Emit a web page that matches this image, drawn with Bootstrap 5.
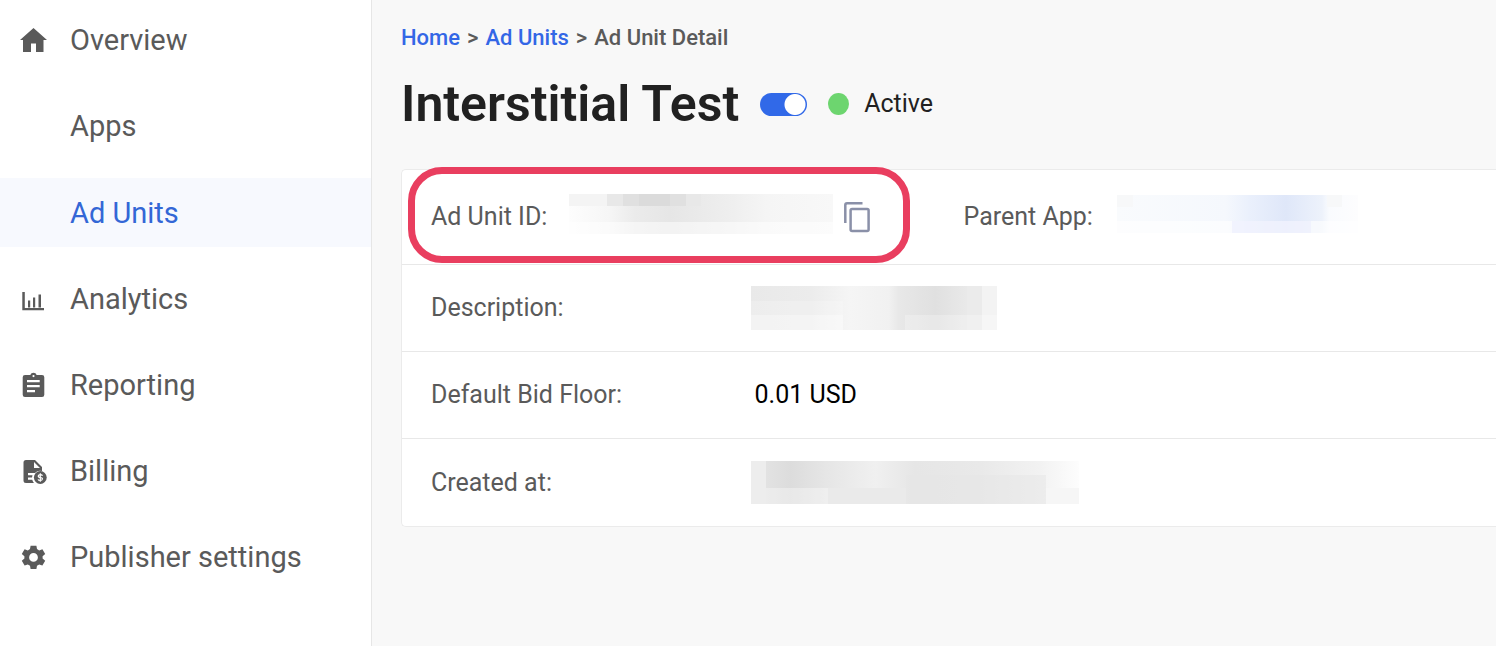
<!DOCTYPE html>
<html lang="en">
<head>
<meta charset="utf-8">
<meta name="viewport" content="width=device-width, initial-scale=1">
<title>Ad Unit Detail</title>
<link href="https://cdn.jsdelivr.net/npm/bootstrap@5.3.0/dist/css/bootstrap.min.css" rel="stylesheet">
<style>
  body { font-family: Roboto, "Liberation Sans", sans-serif; background: #f8f8f8; color: #212121; }
  a { text-decoration: none; }

  /* Sidebar */
  .side-panel { width: 372px; background: #fff; border-right: 1px solid #e6e6e6; padding-top: 5px; }
  .side-menu { gap: 17px; }
  .side-submenu { gap: 18px; }
  .side-menu .nav-link { height: 69px; padding: 2px 20px 0; gap: 23px; font-size: 29px; color: #5a5a5a; }
  .side-menu .nav-link.active { color: #3367d6; background: #f7f9fe; }
  .side-icon { width: 27px; height: 28px; flex: none; margin-bottom: 1px; fill: #5a5a5a; }

  /* Page header */
  .page-main { padding: 21px 0 0 29px; }
  .breadcrumb { --bs-breadcrumb-divider: ">"; --bs-breadcrumb-divider-color: #5a5a5a; --bs-breadcrumb-item-active-color: #5a5a5a; --bs-breadcrumb-item-padding-x: 7px; font-size: 22px; font-weight: 500; line-height: 34px; }
  .breadcrumb a { color: #3367e6; }
  .page-head { gap: 21px; margin: 17px 0 33px; }
  .page-head h1 { font-size: 50px; font-weight: 600; line-height: 64px; }
  .form-check-input.unit-toggle { width: 47px; height: 23px; border: 0; border-radius: 12px; background: #3169e8 radial-gradient(circle at 35px 50%, #fff 10px, transparent 11px); }
  .status { gap: 15px; font-size: 25px; }
  .status-dot { width: 21px; height: 22px; background: #6dd56f; }

  /* Detail list */
  .detail { background: #fff; border: 1px solid #ebebeb; border-right: 0; border-radius: 5px 0 0 5px; font-size: 25px; color: #5a5a5a; }
  .detail-line { min-height: 87px; padding-left: 29px; border-bottom: 1px solid #e8e8e8; }
  .detail-line:first-child { min-height: 95px; }
  .detail-line:last-child { border-bottom: 0; }
  .detail-name { width: 30%; }
  .detail-text { color: #000; padding-left: 4px; }
  .masked { display: block; flex: none; }
  .id-mask { margin-left: 22px; }
  .copy-btn { width: 28px; height: 32px; margin-left: 10px; }
  .highlight { top: -3px; bottom: 1px; left: 6px; width: 502px; border: 7px solid #e93e5f; border-radius: 34px; pointer-events: none; }
</style>
</head>
<body>
<div class="d-flex min-vh-100">
  <nav class="side-panel flex-shrink-0" aria-label="Main">
    <ul class="side-menu nav flex-column flex-nowrap">
      <li class="nav-item"><a class="nav-link d-flex align-items-center" href="#">
        <svg class="side-icon" viewBox="0 0 27 28"><path d="M13.500 2 27 14H23.500V26H16V17.500H11V26H3V14H0Z"/></svg>Overview</a></li>
      <li class="nav-item">
        <ul class="side-submenu nav flex-column">
          <li class="nav-item"><a class="nav-link d-flex align-items-center" href="#"><span class="side-icon"></span>Apps</a></li>
          <li class="nav-item"><a class="nav-link active d-flex align-items-center" href="#" aria-current="page"><span class="side-icon"></span>Ad Units</a></li>
        </ul>
      </li>
      <li class="nav-item"><a class="nav-link d-flex align-items-center" href="#">
        <svg class="side-icon" viewBox="0 0 27 28"><path d="M2.300 7H4.800V23H24V25.200H2.300ZM8 15.500h2.200V22.500H8ZM13 12.500h2.200V22.500H13ZM18.500 9.500h2.500V22.500H18.500Z"/></svg>Analytics</a></li>
      <li class="nav-item"><a class="nav-link d-flex align-items-center" href="#">
        <svg class="side-icon" viewBox="0 0 27 28"><path fill-rule="evenodd" d="M5 4H10.300A3.400 3.400 0 0 1 16.700 4H22Q24.300 4 24.300 6.300V23.700Q24.300 26 22 26H5Q2.700 26 2.700 23.700V6.300Q2.700 4 5 4ZM13.500 4A1.100 1.100 0 1 0 13.500 6.200 1.100 1.100 0 1 0 13.500 4ZM7 9V11.300H19.700V9ZM7 14V16.300H19.700V14ZM7 19V21.300H15V19Z"/></svg>Reporting</a></li>
      <li class="nav-item"><a class="nav-link d-flex align-items-center" href="#">
        <svg class="side-icon" viewBox="0 0 27 28"><path fill-rule="evenodd" d="M6 3H15L22 10V14A7 7 0 0 0 15 16H8V18.200H12.500L12 20.500H8V22.700H12.200Q13 25 14 26H6Q3.500 26 3.500 23.500V5.500Q3.500 3 6 3ZM14 5V11H20Z"/><circle cx="20.300" cy="20.500" r="6.400"/><path d="M22.500 18.700Q22 17.600 20.300 17.600T18.300 19 20.300 20.500 22.400 22 20.300 23.500 18.100 22.300M20.300 16.300V24.700" fill="none" stroke="#fff" stroke-width="1.200"/></svg>Billing</a></li>
      <li class="nav-item"><a class="nav-link d-flex align-items-center" href="#">
        <svg class="side-icon" viewBox="0 0 27 28"><path fill-rule="evenodd" d="M10.600 2.700H16.400L17 6.100 19.200 7.400 22.400 6.200 25.200 11.100 22.600 13.300V15.500L25.200 17.700 22.400 22.600 19.200 21.400 17 22.700 16.400 26.100H10.600L10 22.700 7.800 21.400 4.600 22.600 1.800 17.700 4.400 15.500V13.300L1.800 11.100 4.600 6.200 7.800 7.400 10 6.100ZM13.500 10A4.400 4.400 0 1 0 13.500 18.800 4.400 4.400 0 1 0 13.500 10Z"/></svg>Publisher settings</a></li>
    </ul>
  </nav>

  <main class="page-main flex-grow-1">
    <nav aria-label="breadcrumb">
      <ol class="breadcrumb mb-0">
        <li class="breadcrumb-item"><a href="#">Home</a></li>
        <li class="breadcrumb-item"><a href="#">Ad Units</a></li>
        <li class="breadcrumb-item active" aria-current="page">Ad Unit Detail</li>
      </ol>
    </nav>

    <header class="page-head d-flex align-items-center">
      <h1 class="mb-0">Interstitial Test</h1>
      <input class="form-check-input unit-toggle m-0" type="checkbox" role="switch" id="unitActive" aria-label="Ad unit active" checked>
      <label class="status d-flex align-items-center" for="unitActive"><span class="status-dot rounded-circle"></span>Active</label>
    </header>

    <section class="detail">
      <div class="detail-line d-flex align-items-center position-relative">
        <div class="w-50 d-flex align-items-center">
          <span>Ad Unit ID:</span>
          <svg class="masked id-mask" width="264" height="46" viewBox="0 0 264 46" aria-hidden="true">
            <defs>
              <linearGradient id="maskId"><stop offset="0" stop-color="#fdfdfd"/><stop offset=".15" stop-color="#f6f6f6"/><stop offset=".25" stop-color="#ebebeb"/><stop offset=".38" stop-color="#e6e6e6"/><stop offset=".6" stop-color="#eeeeee"/><stop offset=".75" stop-color="#f5f5f5"/><stop offset="1" stop-color="#f8f8f8"/></linearGradient>
            </defs>
            <rect width="264" height="40" fill="url(#maskId)"/>
            <path d="M0 0H38V12H0Z" fill="#f4f4f4"/><path d="M38 0H54V12H38ZM117 0H132V12H117Z" fill="#e8e8e8"/><path d="M54 0H70V12H54ZM101 0H117V12H101Z" fill="#e0e0e0"/><path d="M70 0H101V12H70Z" fill="#dbdbdb"/>
            <path d="M0 28H264V40H0Z" fill="#fff" fill-opacity=".5"/>
          </svg>
          <button class="copy-btn btn p-0 border-0 d-flex align-items-center" type="button" aria-label="Copy ad unit ID">
            <svg width="28" height="32" viewBox="0 0 28 32" fill="none" stroke="#8a90a8" stroke-width="2.500"><path d="M2.300 22V4Q2.300 2.300 4 2.300H19.500"/><rect x="7.600" y="8" width="18" height="22" rx="1.500"/></svg>
          </button>
          <span class="highlight position-absolute"></span>
        </div>
        <div class="w-50 d-flex align-items-center">
          <span>Parent App:</span>
          <svg class="masked ms-4" width="241" height="44" viewBox="0 0 241 44" aria-hidden="true">
            <defs>
              <linearGradient id="maskApp"><stop offset="0" stop-color="#f9fbfd"/><stop offset=".45" stop-color="#f5f8fd"/><stop offset=".55" stop-color="#eaf0fc"/><stop offset=".7" stop-color="#dfe7f9"/><stop offset=".85" stop-color="#edf2fb"/><stop offset=".88" stop-color="#f9fbfe"/><stop offset="1" stop-color="#fdfdfe"/></linearGradient>
            </defs>
            <rect width="241" height="38" fill="url(#maskApp)"/>
            <path d="M0 26H115V38H0ZM194 26H241V38H194Z" fill="#fff" fill-opacity=".6"/><path d="M115 26H194V38H115Z" fill="#f1f3fe" fill-opacity=".8"/>
            <path d="M0 0H16V12H0ZM210 0H225V12H210Z" fill="#f7f8f9"/>
          </svg>
        </div>
      </div>
      <div class="detail-line d-flex align-items-center">
        <span class="detail-name">Description:</span>
        <svg class="masked" width="246" height="44" viewBox="0 0 246 44" aria-hidden="true">
          <defs>
            <linearGradient id="maskDesc"><stop offset="0" stop-color="#e9e9e9"/><stop offset=".25" stop-color="#ececec"/><stop offset=".4" stop-color="#f5f5f5"/><stop offset=".56" stop-color="#f1f1f1"/><stop offset=".6" stop-color="#e8e8e8"/><stop offset=".75" stop-color="#e0e0e0"/><stop offset=".86" stop-color="#e8e8e8"/><stop offset="1" stop-color="#f3f3f3"/></linearGradient>
          </defs>
          <rect width="246" height="44" fill="url(#maskDesc)"/>
          <path d="M216 0H231V44H216Z" fill="#ebebeb"/><path d="M231 0H246V44H231Z" fill="#f3f3f3"/><path d="M0 15H92V29H0Z" fill="#fff" fill-opacity=".2"/><path d="M0 29H92V44H0Z" fill="#fff" fill-opacity=".45"/><path d="M154 29H246V44H154Z" fill="#fff" fill-opacity=".25"/>
        </svg>
      </div>
      <div class="detail-line d-flex align-items-center">
        <span class="detail-name">Default Bid Floor:</span>
        <span class="detail-text">0.01 USD</span>
      </div>
      <div class="detail-line d-flex align-items-center">
        <span class="detail-name">Created at:</span>
        <svg class="masked" width="328" height="43" viewBox="0 0 328 43" aria-hidden="true">
          <defs>
            <linearGradient id="maskDate"><stop offset="0" stop-color="#e6e6e6"/><stop offset=".12" stop-color="#dcdcdc"/><stop offset=".23" stop-color="#e6e6e6"/><stop offset=".38" stop-color="#f0f0f0"/><stop offset=".5" stop-color="#e6e6e6"/><stop offset=".7" stop-color="#e9e9e9"/><stop offset=".88" stop-color="#f2f2f2"/><stop offset="1" stop-color="#fdfdfd"/></linearGradient>
          </defs>
          <rect width="328" height="43" fill="url(#maskDate)"/>
          <path d="M0 0H15V43H0Z" fill="#ededed"/><path d="M15 27H77V43H15Z" fill="#fff" fill-opacity=".35"/><path d="M77 27H155V43H77Z" fill="#eaeaea"/><path d="M155 14H295V43H155Z" fill="#e5e5e5" fill-opacity=".5"/><path d="M295 27H328V43H295Z" fill="#f6f6f6"/>
        </svg>
      </div>
    </section>
  </main>
</div>
<script src="https://cdn.jsdelivr.net/npm/bootstrap@5.3.0/dist/js/bootstrap.bundle.min.js"></script>
</body>
</html>
